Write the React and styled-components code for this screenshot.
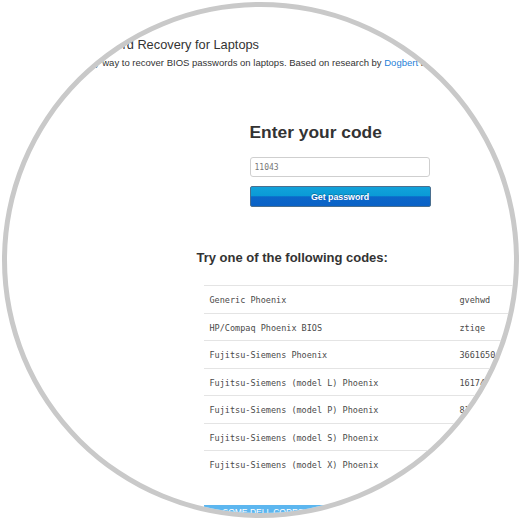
import React from "react";
import styled, { createGlobalStyle } from "styled-components";

const GlobalStyle = createGlobalStyle`
  html, body {
    margin: 0;
    padding: 0;
    background: #fff;
  }
  body {
    font-family: "Liberation Sans", Arial, sans-serif;
    color: #333;
  }
`;

const Frame = styled.div`
  width: 520px;
  height: 520px;
  display: flex;
  align-items: center;
  justify-content: center;
  background: #fff;
`;

const Lens = styled.div`
  width: 517px;
  height: 516px;
  box-sizing: border-box;
  border: 5px solid #c9c9c9;
  border-radius: 50%;
  overflow: hidden;
  background: #fff;
  flex-shrink: 0;
`;

const Page = styled.div`
  width: 620px;
  padding-top: 30px;
`;

const Header = styled.header`
  display: flex;
  flex-direction: column;
`;

const Title = styled.h1`
  margin: 0 0 4px 37px;
  font-size: 12.8px;
  line-height: 16px;
  font-weight: normal;
  color: #333;
  white-space: nowrap;
`;

const Lead = styled.p`
  margin: 0 0 0 72px;
  font-size: 9.5px;
  line-height: 12px;
  color: #333;
  white-space: nowrap;
`;

const Link = styled.a`
  color: #1f7fd8;
  text-decoration: none;
`;

const Form = styled.form`
  margin: 53px 0 0 243px;
  width: 181px;
  display: flex;
  flex-direction: column;
`;

const Heading = styled.h2`
  margin: 0 0 15px;
  font-size: ${(p) => p.size}px;
  line-height: ${(p) => p.lh}px;
  font-weight: bold;
  color: #333;
  white-space: nowrap;
`;

const CodeInput = styled.input`
  box-sizing: border-box;
  width: 180px;
  height: 20px;
  margin: 0 0 9px;
  padding: 0 4px;
  border: 1px solid #cfcfcf;
  border-radius: 3px;
  font-family: "DejaVu Sans Mono", monospace;
  font-size: 8px;
  color: #777;
  outline: none;
`;

const Submit = styled.button`
  box-sizing: border-box;
  width: 181px;
  height: 21px;
  padding: 0;
  border: 1px solid #4a6f8f;
  border-radius: 2px;
  background: linear-gradient(to bottom, #12a2da 0%, #0a9bd6 45%, #0b66c9 52%, #0a62c6 100%);
  color: #fff;
  font-family: "Liberation Sans", Arial, sans-serif;
  font-size: 8.8px;
  font-weight: bold;
  text-shadow: 0 -1px 0 rgba(0, 0, 0, 0.25);
  cursor: pointer;
`;

const Codes = styled.section`
  margin: 43px 0 0 190px;
  display: flex;
  flex-direction: column;
`;

const Table = styled.div`
  margin: 4px 0 0 7px;
  width: 330px;
  display: flex;
  flex-direction: column;
`;

const Row = styled.div`
  height: 27.5px;
  box-sizing: border-box;
  border-top: 1px solid #e4e4e4;
  display: grid;
  grid-template-columns: 250px 1fr;
  align-items: center;
  padding: 2px 0 0 6px;
  font-family: "DejaVu Sans Mono", "Liberation Mono", monospace;
  font-size: 8.5px;
  color: #4a4a4a;
  white-space: nowrap;
`;

const Notice = styled.div`
  margin: 27px 0 0 7px;
  width: 260px;
  height: 20px;
  padding-left: 19px;
  box-sizing: border-box;
  background: #5cb6ef;
  color: #fff;
  font-size: 8.5px;
  line-height: 14px;
  text-transform: uppercase;
  white-space: nowrap;
`;

const codes = [
  ["Generic Phoenix", "gvehwd"],
  ["HP/Compaq Phoenix BIOS", "ztiqe"],
  ["Fujitsu-Siemens Phoenix", "3661650"],
  ["Fujitsu-Siemens (model L) Phoenix", "1617410"],
  ["Fujitsu-Siemens (model P) Phoenix", "8161710"],
  ["Fujitsu-Siemens (model S) Phoenix", "3668800"],
  ["Fujitsu-Siemens (model X) Phoenix", "4433116"],
];

export default function App() {
  return (
    <>
      <GlobalStyle />
      <Frame>
        <Lens>
          <Page>
            <Header>
              <Title>BIOS Password Recovery for Laptops</Title>
              <Lead>
                Easy way to recover BIOS passwords on laptops. Based on research by{" "}
                <Link href="#">Dogbert</Link> and <Link href="#">asyncritus</Link>.
              </Lead>
            </Header>
            <Form onSubmit={(e) => e.preventDefault()}>
              <Heading size={17.4} lh={20}>Enter your code</Heading>
              <CodeInput defaultValue="11043" />
              <Submit type="submit">Get password</Submit>
            </Form>
            <Codes>
              <Heading size={13} lh={16}>Try one of the following codes:</Heading>
              <Table>
                {codes.map(([name, pw]) => (
                  <Row key={name}>
                    <span>{name}</span>
                    <span>{pw}</span>
                  </Row>
                ))}
              </Table>
              <Notice>Some Dell codes require a suffix</Notice>
            </Codes>
          </Page>
        </Lens>
      </Frame>
    </>
  );
}
